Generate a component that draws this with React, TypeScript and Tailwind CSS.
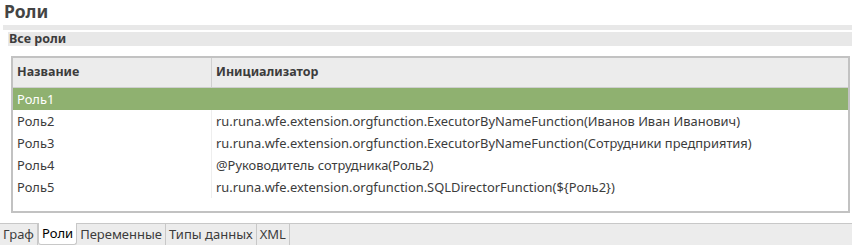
const roles = [
  { name: 'Роль1', init: '' },
  { name: 'Роль2', init: 'ru.runa.wfe.extension.orgfunction.ExecutorByNameFunction(Иванов Иван Иванович)' },
  { name: 'Роль3', init: 'ru.runa.wfe.extension.orgfunction.ExecutorByNameFunction(Сотрудники предприятия)' },
  { name: 'Роль4', init: '@Руководитель сотрудника(Роль2)' },
  { name: 'Роль5', init: 'ru.runa.wfe.extension.orgfunction.SQLDirectorFunction(${Роль2})' },
];

const tabs = ['Граф', 'Роли', 'Переменные', 'Типы данных', 'XML'];

const App = (): JSX.Element => {
  const selected = 0;
  const activeTab = 1;

  return (
    <div className="w-[852px] h-[245px] bg-white flex flex-col font-['Noto_Sans',sans-serif] text-[#3c3c3c] overflow-hidden">
      <div className="h-[25px] pl-[4px] text-[17.5px] leading-[22px] font-bold text-[#444]">Роли</div>
      <div className="ml-[3px] h-[5px] bg-[#e8e8e8]" />
      <div className="ml-[8px] mt-[2px] h-[14px] bg-[#e8e8e8] pl-[1px] text-[12.5px] leading-[14px] font-bold">Все роли</div>
      <div className="ml-[11px] mr-[2px] mt-[10px] h-[157px] border-2 border-[#c2c2c2] flex flex-col">
        <div className="flex h-[30px] bg-[#ececec] border-b border-[#cfcfcf] text-[12.5px] font-bold">
          <div className="w-[199px] pl-[4px] flex items-center border-r border-[#d0d0d0]">Название</div>
          <div className="flex-1 pl-[4px] flex items-center">Инициализатор</div>
        </div>
        {roles.map((r, i) => (
          <div
            key={r.name}
            className={`flex h-[22px] text-[12.9px] leading-[22px] ${
              i === selected ? 'bg-[#8fb170] text-white' : ''
            }`}
          >
            <div className={`w-[199px] pl-[4px] border-r ${i === selected ? 'border-[#8fb170]' : 'border-[#eeeeee]'}`}>
              {r.name}
            </div>
            <div className="flex-1 pl-[4px] whitespace-nowrap">{r.init}</div>
          </div>
        ))}
      </div>
      <div className="mt-auto h-[22px] bg-[#ececec] border-t border-[#c8c8c8] flex text-[13px]">
        {tabs.map((t, i) => (
          <div
            key={t}
            className={`px-[3px] leading-[20px] border-r border-[#c8c8c8] ${
              i === activeTab
                ? 'bg-white -mt-px border-l border-b rounded-b-[3px] text-black'
                : 'text-[#3c3c3c]'
            }`}
          >
            {t}
          </div>
        ))}
      </div>
    </div>
  );
};

export default App;
